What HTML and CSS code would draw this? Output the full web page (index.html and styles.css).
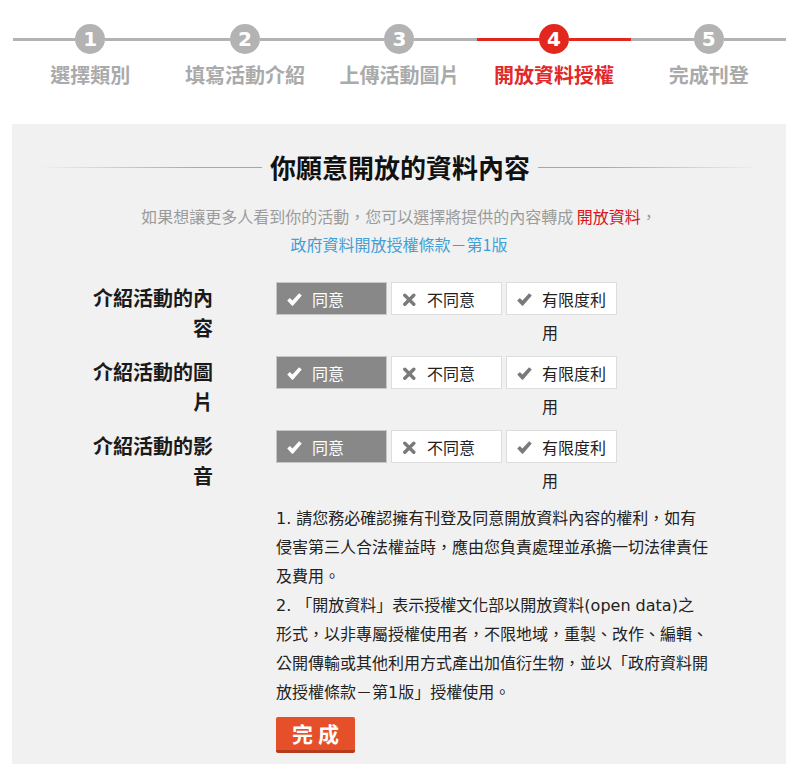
FILE: index.html
```html
<!DOCTYPE html>
<html lang="zh-Hant">
<head>
<meta charset="utf-8">
<title>開放資料授權</title>
<link rel="stylesheet" href="styles.css">
</head>
<body>
<div class="page">
  <ol class="steps">
    <li class="step">
      <div class="track"><span class="seg"></span><span class="num">1</span><span class="seg"></span></div>
      <div class="step-label">選擇類別</div>
    </li>
    <li class="step">
      <div class="track"><span class="seg"></span><span class="num">2</span><span class="seg"></span></div>
      <div class="step-label">填寫活動介紹</div>
    </li>
    <li class="step">
      <div class="track"><span class="seg"></span><span class="num">3</span><span class="seg"></span></div>
      <div class="step-label">上傳活動圖片</div>
    </li>
    <li class="step active">
      <div class="track"><span class="seg"></span><span class="num">4</span><span class="seg"></span></div>
      <div class="step-label">開放資料授權</div>
    </li>
    <li class="step">
      <div class="track"><span class="seg"></span><span class="num">5</span><span class="seg"></span></div>
      <div class="step-label">完成刊登</div>
    </li>
  </ol>

  <section class="panel">
    <h2 class="title-row"><span class="rule rule-l"></span><span class="title">你願意開放的資料內容</span><span class="rule rule-r"></span></h2>
    <p class="intro">如果想讓更多人看到你的活動，您可以選擇將提供的內容轉成 <span class="hl">開放資料</span>，<br><a class="lic" href="#">政府資料開放授權條款－第1版</a></p>

    <div class="opt-row">
      <div class="opt-label">介紹活動的內容</div>
      <div class="opt-btns">
        <span class="opt sel"><svg class="ico" viewBox="0 0 15 13"><path class="ck" d="M0.2 7.4 L2.9 4.9 L5.4 7.5 L12.1 0.2 L14.8 2.6 L6.2 12.4 Q5.5 13.1 4.8 12.4 Z"/></svg><span class="opt-text">同意</span></span>
        <span class="opt"><svg class="ico" viewBox="0 0 15 13"><path class="xx" d="M2.8 2.2 L11.8 11.2 M11.8 2.2 L2.8 11.2"/></svg><span class="opt-text">不同意</span></span>
        <span class="opt"><svg class="ico" viewBox="0 0 15 13"><path class="ck" d="M0.2 7.4 L2.9 4.9 L5.4 7.5 L12.1 0.2 L14.8 2.6 L6.2 12.4 Q5.5 13.1 4.8 12.4 Z"/></svg><span class="opt-text">有限度利用</span></span>
      </div>
    </div>

    <div class="opt-row">
      <div class="opt-label">介紹活動的圖片</div>
      <div class="opt-btns">
        <span class="opt sel"><svg class="ico" viewBox="0 0 15 13"><path class="ck" d="M0.2 7.4 L2.9 4.9 L5.4 7.5 L12.1 0.2 L14.8 2.6 L6.2 12.4 Q5.5 13.1 4.8 12.4 Z"/></svg><span class="opt-text">同意</span></span>
        <span class="opt"><svg class="ico" viewBox="0 0 15 13"><path class="xx" d="M2.8 2.2 L11.8 11.2 M11.8 2.2 L2.8 11.2"/></svg><span class="opt-text">不同意</span></span>
        <span class="opt"><svg class="ico" viewBox="0 0 15 13"><path class="ck" d="M0.2 7.4 L2.9 4.9 L5.4 7.5 L12.1 0.2 L14.8 2.6 L6.2 12.4 Q5.5 13.1 4.8 12.4 Z"/></svg><span class="opt-text">有限度利用</span></span>
      </div>
    </div>

    <div class="opt-row">
      <div class="opt-label">介紹活動的影音</div>
      <div class="opt-btns">
        <span class="opt sel"><svg class="ico" viewBox="0 0 15 13"><path class="ck" d="M0.2 7.4 L2.9 4.9 L5.4 7.5 L12.1 0.2 L14.8 2.6 L6.2 12.4 Q5.5 13.1 4.8 12.4 Z"/></svg><span class="opt-text">同意</span></span>
        <span class="opt"><svg class="ico" viewBox="0 0 15 13"><path class="xx" d="M2.8 2.2 L11.8 11.2 M11.8 2.2 L2.8 11.2"/></svg><span class="opt-text">不同意</span></span>
        <span class="opt"><svg class="ico" viewBox="0 0 15 13"><path class="ck" d="M0.2 7.4 L2.9 4.9 L5.4 7.5 L12.1 0.2 L14.8 2.6 L6.2 12.4 Q5.5 13.1 4.8 12.4 Z"/></svg><span class="opt-text">有限度利用</span></span>
      </div>
    </div>

    <div class="notes">
      <p>1. 請您務必確認擁有刊登及同意開放資料內容的權利，如有侵害第三人合法權益時，應由您負責處理並承擔一切法律責任及費用。</p>
      <p>2. 「開放資料」表示授權文化部以開放資料(open data)之形式，以非專屬授權使用者，不限地域，重製、改作、編輯、公開傳輸或其他利用方式產出加值衍生物，並以「政府資料開放授權條款－第1版」授權使用。</p>
    </div>

    <button class="done" type="button">完 成</button>
  </section>
</div>
</body>
</html>
```
FILE: styles.css
```css
html, body {
  margin: 0;
  padding: 0;
  background: #ffffff;
}

body {
  font-family: "DejaVu Sans", "Noto Sans CJK TC", sans-serif;
  color: #222222;
}

.page {
  width: 774px;
  margin-left: 12px;
}

/* ---------- steps ---------- */
.steps {
  list-style: none;
  display: flex;
  margin: 0 0 0 1px;
  padding: 24px 0 0 0;
  width: 773px;
}

.step {
  flex: 1 1 0;
  min-width: 0;
}

.track {
  display: flex;
  align-items: center;
  height: 30px;
}

.seg {
  flex: 1 1 0;
  height: 3px;
  background: #b3b3b3;
}

.num {
  flex: none;
  width: 30px;
  height: 30px;
  border-radius: 50%;
  background: #b3b3b3;
  color: #ffffff;
  font-family: "DejaVu Sans", sans-serif;
  font-weight: bold;
  font-size: 20px;
  line-height: 30px;
  text-align: center;
}

.step-label {
  margin-top: 9px;
  font-family: "Noto Sans CJK TC", sans-serif;
  font-weight: bold;
  font-size: 20px;
  line-height: 24px;
  text-align: center;
  color: #aaaaaa;
}

.step.active .seg,
.step.active .num {
  background: #e2271f;
}

.step.active .step-label {
  color: #e1282a;
}

/* ---------- panel ---------- */
.panel {
  margin-top: 37px;
  background: #f1f1f1;
  padding: 25px 0 11px 0;
}

.title-row {
  display: flex;
  align-items: center;
  gap: 8px;
  margin: 0;
  padding: 0 26px 0 28px;
}

.rule {
  flex: 1 1 0;
  height: 1px;
}

.rule-l {
  background: linear-gradient(to right, rgba(180, 180, 180, 0), #aaaaaa 70%, #a6a6a6);
}

.rule-r {
  background: linear-gradient(to left, rgba(180, 180, 180, 0), #aaaaaa 70%, #a6a6a6);
}

.title {
  font-family: "Noto Sans CJK TC", sans-serif;
  font-weight: bold;
  font-size: 26px;
  line-height: 36px;
  color: #111111;
}

.intro {
  margin: 17px 0 24px 0;
  text-align: center;
  font-family: "Noto Sans CJK TC", sans-serif;
  font-size: 16px;
  line-height: 28px;
  color: #9b9b9b;
}

.hl {
  color: #d3141c;
}

.lic {
  color: #3f9fd6;
  text-decoration: none;
}

/* ---------- option rows ---------- */
.opt-row {
  display: flex;
  align-items: flex-start;
  gap: 63px;
  padding-left: 71px;
  margin-bottom: 13px;
}

.opt-label {
  width: 130px;
  flex: none;
  padding-top: 1px;
  text-align: right;
  font-family: "Noto Sans CJK TC", sans-serif;
  font-weight: bold;
  font-size: 20px;
  line-height: 30px;
  color: #1a1a1a;
}

.opt-btns {
  display: flex;
  gap: 4px;
}

.opt {
  box-sizing: border-box;
  display: flex;
  align-items: flex-start;
  width: 111px;
  height: 33px;
  padding: 0 6px 0 10px;
  border: 1px solid #dddddd;
  background: #ffffff;
  color: #222222;
  font-family: "Noto Sans CJK TC", sans-serif;
  font-size: 16px;
  line-height: 33px;
}

.opt .ico {
  flex: none;
  width: 15px;
  height: 13px;
  margin: 10px 10px 0 0;
}

.opt .ck {
  fill: #7a7a7a;
}

.opt .xx {
  fill: none;
  stroke: #7a7a7a;
  stroke-width: 3.4;
  stroke-linecap: round;
}

.opt-text {
  min-width: 0;
}

.opt.sel {
  background: #888888;
  border-color: #c6c6c6;
  color: #ffffff;
}

.opt.sel .ck {
  fill: #ffffff;
}

/* ---------- notes ---------- */
.notes {
  margin: 3px 0 0 264px;
  width: 433px;
  font-size: 16px;
  line-height: 29px;
  color: #222222;
}

.notes p {
  margin: 0;
}

.done {
  display: block;
  margin: 10px 0 0 264px;
  width: 79px;
  height: 36px;
  padding: 0;
  border: none;
  border-bottom: 3px solid #b63b1b;
  border-radius: 2px;
  background: #e5502b;
  color: #ffffff;
  font-family: "Noto Sans CJK TC", sans-serif;
  font-weight: bold;
  font-size: 21px;
  line-height: 33px;
  text-align: center;
  cursor: pointer;
}
```
